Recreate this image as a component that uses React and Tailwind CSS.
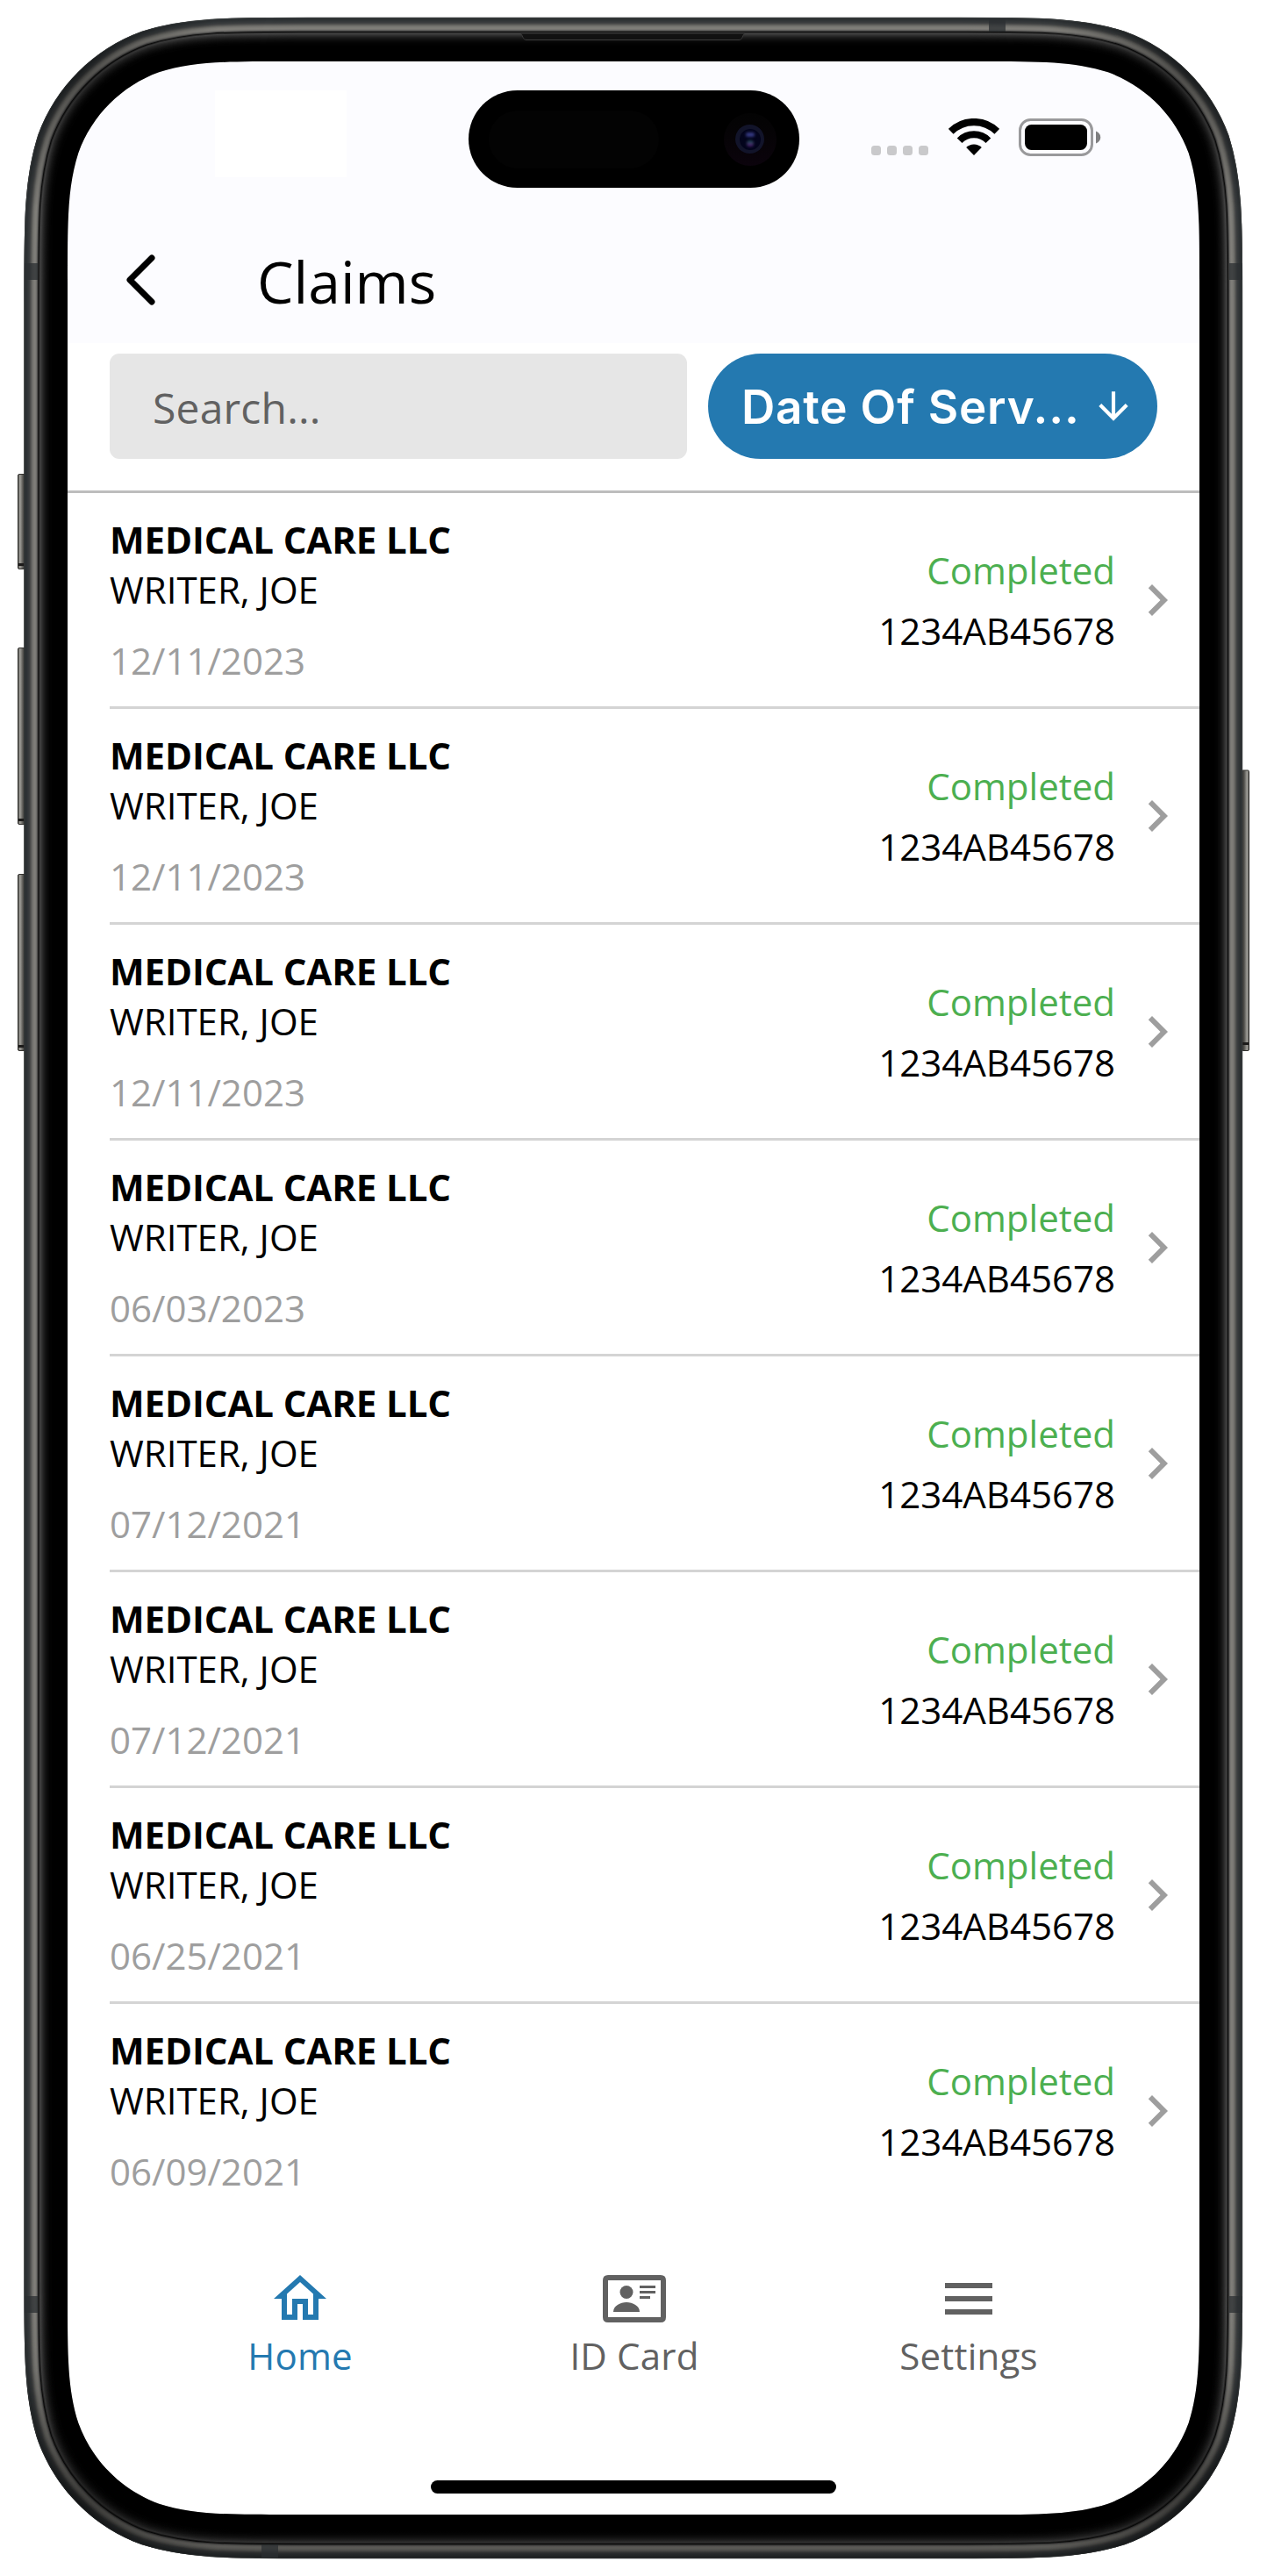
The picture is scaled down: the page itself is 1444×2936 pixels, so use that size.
import { MdOutlineHome, MdMenu, MdChevronRight, MdArrowDownward } from "react-icons/md";

const claims = [
  "12/11/2023",
  "12/11/2023",
  "12/11/2023",
  "06/03/2023",
  "07/12/2021",
  "07/12/2021",
  "06/25/2021",
  "06/09/2021",
];

/* Rounded rectangle with continuous-curvature corners. */
function squircle(x, y, w, h, r) {
  const pts = (cx, cy, sx, sy, flip) => {
    const p = (a, b) => {
      const [u, v] = flip ? [b, a] : [a, b];
      return `${(cx + sx * u * r).toFixed(2)} ${(cy + sy * v * r).toFixed(2)}`;
    };
    return (
      `L${p(1.528665, 0)}` +
      `C${p(1.08849296, 0)} ${p(0.86840694, 0)} ${p(0.63149399, 0.074911)}` +
      `C${p(0.37282392, 0.16905899)} ${p(0.16906013, 0.37282401)} ${p(0.07491176, 0.63149399)}` +
      `C${p(0, 0.86840701)} ${p(0, 1.08849299)} ${p(0, 1.52866483)}`
    );
  };
  return (
    `M${x + w / 2} ${y}` +
    pts(x + w, y, -1, 1, false) +
    pts(x + w, y + h, -1, -1, true) +
    pts(x, y + h, 1, -1, false) +
    pts(x, y, 1, 1, true) +
    "Z"
  );
}

const rings = [
  "#3c4041", "#2b2f31", "#2d3133", "#303436", "#34383a", "#383b3c", "#404243", "#4e4f4e",
  "#5e5e5b", "#6d6d69", "#777672", "#7d7c77", "#807f7a", "#7b7a76", "#6c6b68", "#484847",
  "#0c0c0c", "#2a2a2a", "#444444", "#3a3a3a", "#303030", "#282828", "#212121", "#1a1a1a",
  "#151515", "#101010", "#0c0c0c", "#090909", "#060606", "#040404", "#020202",
];

const corners = [
  [85, 78],
  [1359, 78],
  [85, 2858],
  [1359, 2858],
];

function Frame() {
  const outer = squircle(27.5, 20, 1388.5, 2896, 212);
  const inner = squircle(77, 70, 1290, 2796, 165);
  return (
    <svg className="pointer-events-none absolute inset-0" width="1444" height="2936" viewBox="0 0 1444 2936" fill="none">
      <defs>
        <linearGradient id="key" x1="0" x2="1" y1="0" y2="0">
          <stop offset="0" stopColor="#3d3c39" />
          <stop offset="0.25" stopColor="#a3a29c" />
          <stop offset="0.6" stopColor="#5c5b57" />
          <stop offset="1" stopColor="#22211f" />
        </linearGradient>
        <linearGradient id="shade" x1="0" x2="0" y1="0" y2="1">
          <stop offset="0.9" stopColor="#000" stopOpacity="0" />
          <stop offset="1" stopColor="#000" stopOpacity="0.3" />
        </linearGradient>
        {corners.map(([x, y], i) => (
          <radialGradient key={i} id={`corner${i}`} gradientUnits="userSpaceOnUse" cx={x} cy={y} r="170">
            <stop offset="0" stopColor="#000" stopOpacity="0.4" />
            <stop offset="1" stopColor="#000" stopOpacity="0" />
          </radialGradient>
        ))}
      </defs>
      {[[540, 109], [738, 202], [996, 202]].map(([y, h]) => (
        <g key={y}>
          <rect x="20.500" y={y + 0.5} width="9" height={h - 1} rx="1.5" fill="url(#key)" stroke="#33322f" />
          <rect x="21" y={y + h - 7} width="7" height="3" fill="#1c1b1a" />
        </g>
      ))}
      <rect x="1415" y="878" width="8.5" height="319.5" rx="1.5" fill="url(#key)" stroke="#33322f" transform="matrix(-1 0 0 1 2838.5 0)" />
      <rect x="1416" y="1188" width="7" height="3" fill="#1c1b1a" />
      <path d={outer + inner} fill="#000" fillRule="evenodd" />
      {rings.map((c, i) => (
        <path
          key={i}
          d={squircle(28.3 + i, 20.8 + i, 1386.9 - 2 * i, 2894.4 - 2 * i, 211.2 - i)}
          stroke={c}
          strokeWidth="2"
        />
      ))}
      <path d={outer + inner} fill="url(#shade)" fillRule="evenodd" />
      <path d={outer + inner} fill="url(#corner0)" fillRule="evenodd" />
      <path d={outer + inner} fill="url(#corner1)" fillRule="evenodd" />
      <path d={outer + inner} fill="url(#corner2)" fillRule="evenodd" />
      <path d={outer + inner} fill="url(#corner3)" fillRule="evenodd" />
      <g fill="#2b2f31" opacity="0.75">
        <rect x="28" y="300" width="15" height="19" />
        <rect x="1401" y="300" width="15" height="19" />
        <rect x="28" y="2617" width="15" height="19" />
        <rect x="1401" y="2617" width="15" height="19" />
        <rect x="1127" y="21" width="19" height="15" />
        <rect x="298" y="2900" width="19" height="15" />
      </g>
      <path d="M593 38h256c-3 1-2 7.500-7 7.500H600c-5 0-4-6.500-7-7.500Z" fill="#111" stroke="#3a3a3a" />
    </svg>
  );
}

function Island() {
  return (
    <div className="absolute left-[456.500px] top-[33px] flex h-[111px] w-[377px] items-center justify-between rounded-full bg-black pl-[23px] pr-[26px]">
      <div className="h-[66px] w-[194px] rounded-full bg-[#030303]" />
      <div className="flex size-[60px] items-center justify-center rounded-full bg-linear-to-b from-[#030303] to-[#0b030c]">
        <div className="flex size-[33px] items-center justify-center rounded-full bg-[#12142a]">
          <div className="flex size-[24px] flex-col items-center justify-between rounded-full bg-[#03041c] py-[4px]">
            <div className="h-[5px] w-[10px] rounded-full bg-[#343880] blur-[1.500px]" />
            <div className="h-[7px] w-[8px] rounded-full bg-linear-to-b from-[#0a4a50] to-[#4d1070] blur-[1.500px]" />
          </div>
        </div>
      </div>
    </div>
  );
}

function StatusBar() {
  return (
    <div className="flex h-[174px] justify-between pl-[168px] pr-[112px]">
      <div className="mt-[33px] h-[99px] w-[150px] bg-white" />
      <div className="mt-[65px] flex h-[43px]">
        <div className="mt-[31px] mr-[23px] flex gap-[7px]">
          {[0, 1, 2, 3].map((i) => (
            <span key={i} className="size-[11px] rounded-[3.500px] bg-[#c9c9cb]" />
          ))}
        </div>
        <svg width="58" height="43" viewBox="0 0 58 43" className="mr-[22.500px]" fill="none">
          <path d="M2.700 14.800a37.500 37.500 0 0 1 52.600 0" stroke="#000" strokeWidth="8.200" />
          <path d="M12.600 25.200a23 23 0 0 1 32.800 0" stroke="#000" strokeWidth="8" />
          <path d="M29 42 20.200 33a12.500 12.500 0 0 1 17.600 0Z" fill="#000" />
        </svg>
        <svg width="94" height="43" viewBox="0 0 94 43">
          <rect x="1.500" y="1.500" width="82" height="40" rx="12" fill="none" stroke="#99999b" strokeWidth="3" />
          <rect x="7" y="7" width="71" height="29" rx="7.500" fill="#000" />
          <path d="M88 14.500c7 2.500 7 11.500 0 14Z" fill="#7f7f80" />
        </svg>
      </div>
    </div>
  );
}

function Claim({ date, last }) {
  return (
    <li className="pl-12">
      <div className={last ? "flex h-[246px]" : "flex h-[246px] border-b-[3px] border-[#d4d4d4]"}>
        <div className="flex-1 pt-[24px] text-[42px] leading-[57px]">
          <p className="font-bold tracking-[-0.1px]">MEDICAL CARE LLC</p>
          <p>WRITER, JOE</p>
          <p className="mt-[24px] text-[#9e9e9e]">{date}</p>
        </div>
        <div className="pt-[53px] pr-[12px] text-right text-[42px] leading-[69px]">
          <p className="text-[#4caf50]">Completed</p>
          <p>1234AB45678</p>
        </div>
        <MdChevronRight className="mt-[86px] mr-[12px] size-[72px] text-[#9e9e9e]" />
      </div>
    </li>
  );
}

function Tab({ icon, label, color }) {
  return (
    <div className={`flex w-[381px] flex-col items-center ${color}`}>
      {icon}
      <span className="text-[42px] leading-[57px] tracking-[0.2px]">{label}</span>
    </div>
  );
}

export default function App() {
  return (
    <div className="relative h-[2936px] w-[1444px] overflow-hidden bg-white px-[77px] pt-[70px] font-['Open_Sans',sans-serif] text-black">
      <div className="relative flex h-[2796px] w-[1290px] flex-col overflow-hidden rounded-[120px] bg-white">
        <header className="h-[321px] shrink-0 bg-[#fcfcff]">
          <StatusBar />
          <div className="flex h-[147px] items-center pl-[67px]">
            <svg width="34" height="58" viewBox="0 0 34 58" className="mt-[3px]" fill="none" stroke="#000" strokeWidth="7" strokeLinecap="round" strokeLinejoin="round">
              <path d="M29 4 4 29l25 25" />
            </svg>
            <h1 className="ml-[115px] mt-[4px] text-[66px] leading-[90px]">Claims</h1>
          </div>
        </header>
        <Island />
        <div className="flex h-[171px] shrink-0 gap-6 border-b-[3px] border-[#bdbdbd] pl-12 pr-12 pt-[12px]">
          <div className="flex h-[120px] w-[658px] items-center rounded-[11px] bg-[#e6e6e6] pl-[49px] text-[48px] tracking-[0.2px] text-[#616161]">
            <span className="mt-[4px]">Search...</span>
          </div>
          <button className="flex h-[120px] w-[512px] items-center justify-between rounded-full bg-[#2479b0] pl-[38px] pr-[25px] font-['Inter',sans-serif] text-[53px] font-[560] text-white">
            <span className="mt-[3px] tracking-[0.8px]">Date Of Serv...</span>
            <MdArrowDownward className="size-[50px]" />
          </button>
        </div>
        <ul className="shrink-0">
          {claims.map((d, i) => (
            <Claim key={i} date={d} last={i === claims.length - 1} />
          ))}
        </ul>
        <nav className="flex justify-center pl-[2px] pt-[54px]">
          <Tab icon={<MdOutlineHome className="size-[72px]" />} label="Home" color="text-[#2479b0]" />
          <Tab
            icon={
              <svg className="size-[72px]" viewBox="0 0 72 72" fill="currentColor">
                <path fillRule="evenodd" d="M6 9h60q6 0 6 6v42q0 6-6 6H6q-6 0-6-6V15q0-6 6-6Zm0 6v42h60V15Z" />
                <circle cx="27" cy="28.500" r="7.500" />
                <path d="M12 51c0-7 8-11 15-11s15 4 15 11Z" />
                <path d="M42 21h18v3H42zM42 27h18v3H42zM42 33h12v3H42z" />
              </svg>
            }
            label="ID Card"
            color="text-[#616161]"
          />
          <Tab icon={<MdMenu className="size-[72px]" />} label="Settings" color="text-[#616161]" />
        </nav>
        <div className="absolute bottom-[24px] left-[414px] h-[15px] w-[462px] rounded-full bg-black" />
      </div>
      <Frame />
    </div>
  );
}
